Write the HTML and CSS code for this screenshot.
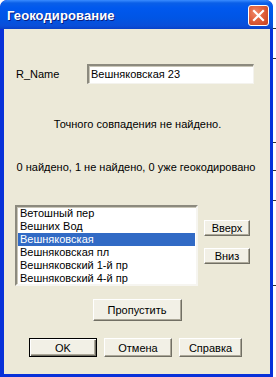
FILE: index.html
```html
<!DOCTYPE html>
<html>
<head>
<meta charset="utf-8">
<link rel="stylesheet" href="styles.css">
</head>
<body>
<div class="page">
  <div class="window">
    <div class="titlebar">
      <span class="title">Геокодирование</span>
      <span class="close">
        <svg width="13" height="13" viewBox="0 0 13 13"><path d="M2 2 L11 11 M11 2 L2 11" stroke="#fff" stroke-width="2.2" stroke-linecap="square"/></svg>
      </span>
    </div>
    <div class="client">
      <div class="field-row">
        <span class="label">R_Name</span>
        <span class="input">Вешняковская 23</span>
      </div>
      <div class="msg msg1">Точного совпадения не найдено.</div>
      <div class="msg msg2">0 найдено, 1 не найдено, 0 уже геокодировано</div>
      <div class="list-row">
        <div class="listbox">
          <div class="item">Ветошный пер</div>
          <div class="item">Вешних Вод</div>
          <div class="item selected">Вешняковская</div>
          <div class="item">Вешняковская пл</div>
          <div class="item">Вешняковский 1-й пр</div>
          <div class="item">Вешняковский 4-й пр</div>
        </div>
        <div class="side-buttons">
          <span class="btn small">Вверх</span>
          <span class="btn small">Вниз</span>
        </div>
      </div>
      <div class="skip-row">
        <span class="btn skip">Пропустить</span>
      </div>
      <div class="bottom-row">
        <span class="btn default">OK</span>
        <span class="btn">Отмена</span>
        <span class="btn help">Справка</span>
      </div>
    </div>
  </div>
  <div class="strip">
    <i class="tick t1"></i><i class="tick t2"></i><i class="tick t3"></i><i class="tick t4"></i><i class="tick t5"></i><i class="tick t6"></i>
  </div>
</div>
</body>
</html>
```

FILE: styles.css
```css
html, body {
  margin: 0;
  padding: 0;
  background: #fff;
}
.page {
  width: 276px;
  height: 377px;
  display: flex;
  overflow: hidden;
  font-family: "Liberation Sans", Arial, sans-serif;
  font-size: 11px;
  color: #000;
}
.window {
  width: 273px;
  height: 377px;
  display: flex;
  flex-direction: column;
  background: #0831d9;
  border-radius: 7px 7px 0 0;
  overflow: hidden;
}
.titlebar {
  height: 29px;
  flex: none;
  display: flex;
  align-items: center;
  justify-content: space-between;
  padding: 0 4px 0 7px;
  box-sizing: border-box;
  background: linear-gradient(to bottom, #3a8cff 0px, #0a5fe8 3px, #0058ee 8px, #0055e5 18px, #0a4ed8 26px, #0840c8 29px);
  border-radius: 7px 7px 0 0;
}
.title {
  color: #fff;
  font-weight: bold;
  font-size: 13px;
  text-shadow: 1px 1px 0 #0a1e80;
  letter-spacing: 0.1px;
  margin-top: 1px;
}
.close {
  width: 21px;
  height: 21px;
  box-sizing: border-box;
  border: 1px solid #fff;
  border-radius: 3px;
  background: radial-gradient(circle at 35% 35%, #f08a6a 0%, #e0603c 45%, #c2401e 100%);
  display: flex;
  align-items: center;
  justify-content: center;
  margin-top: 2px;
}
.client {
  flex: 1;
  margin: 0 3px 3px 4px;
  background: #ece9d8;
  display: flex;
  flex-direction: column;
}
.field-row {
  margin-top: 35px;
  height: 20px;
  display: flex;
  align-items: center;
  padding-left: 12px;
}
.label {
  width: 71px;
}
.input {
  width: 167px;
  height: 20px;
  box-sizing: border-box;
  background: #fff;
  border-top: 2px solid #8c8a7e;
  border-left: 2px solid #8c8a7e;
  border-bottom: 1px solid #f4f3ee;
  border-right: 1px solid #f4f3ee;
  box-shadow: inset 1px 1px 0 #c9c6b8;
  padding-left: 2px;
  line-height: 17px;
}
.msg {
  text-align: center;
  line-height: 13px;
  height: 13px;
}
.msg1 {
  margin-top: 34px;
  padding-left: 1px;
}
.msg2 {
  margin-top: 30px;
  padding-right: 2px;
}
.list-row {
  margin-top: 31px;
  display: flex;
  padding-left: 11px;
}
.listbox {
  width: 183px;
  height: 81px;
  box-sizing: border-box;
  background: #fff;
  border-top: 2px solid #8c8a7e;
  border-left: 2px solid #8c8a7e;
  border-bottom: 2px solid #f6f5f0;
  border-right: 2px solid #f6f5f0;
  box-shadow: inset 1px 1px 0 #c9c6b8;
  padding: 0 1px;
}
.item {
  height: 13px;
  line-height: 13px;
  padding-left: 2px;
  white-space: nowrap;
}
.selected {
  background: #316ac5;
  color: #fff;
}
.side-buttons {
  display: flex;
  flex-direction: column;
  margin-left: 6px;
  padding-top: 15px;
  gap: 12px;
}
.btn {
  display: flex;
  align-items: center;
  justify-content: center;
  box-sizing: border-box;
  width: 68px;
  height: 19px;
  background: #f2f0e6;
  border-top: 1px solid #fff;
  border-left: 1px solid #fff;
  border-right: 1px solid #716f64;
  border-bottom: 1px solid #716f64;
  box-shadow: inset -1px -1px 0 #aca899;
}
.btn.small {
  width: 46px;
  height: 16px;
}
.skip-row {
  margin-top: 13px;
  display: flex;
  justify-content: center;
}
.btn.skip {
  width: 89px;
  height: 22px;
}
.bottom-row {
  margin-top: 17px;
  display: flex;
  gap: 7px;
  padding-left: 25px;
}
.btn.default {
  border: 1px solid #000;
  box-shadow: inset 1px 1px 0 #fff, inset -1px -1px 0 #716f64, inset -2px -2px 0 #aca899;
}
.btn.help {
  width: 63px;
}
.strip {
  flex: 1;
  position: relative;
  background: #fff;
}
.tick {
  position: absolute;
  left: 0;
  width: 3px;
  height: 1px;
  background: #333;
}
.t1 { top: 28px; }
.t2 { top: 58px; }
.t3 { top: 142px; }
.t4 { top: 170px; }
.t5 { top: 200px; }
.t6 { top: 285px; }
```
